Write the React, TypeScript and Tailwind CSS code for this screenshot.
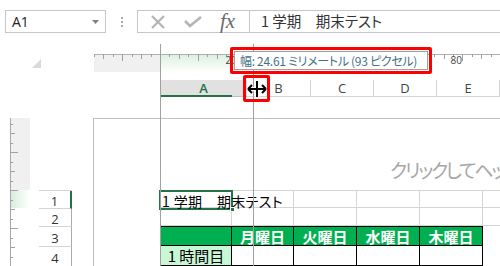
import React from 'react';

const GRID = 'border-[#d4d4d4]';
const PALT = "[font-feature-settings:'palt']";

function NameBox() {
  return (
    <div className="flex h-[23px] w-[101px] items-center justify-between border border-[#c6c6c6] pl-[6px] pr-[6px]">
      <span className="font-['Open_Sans',sans-serif] text-[14px] leading-none text-[#222]">A1</span>
      <svg width="7" height="4" viewBox="0 0 7 4">
        <path d="M0 0h7L3.5 4z" fill="#808080" />
      </svg>
    </div>
  );
}

function FormulaButtons() {
  return (
    <div className="flex h-[23px] w-[113px] items-center border border-[#c6c6c6] pl-[12px]">
      <svg width="16" height="16" viewBox="0 0 16 16" className="mr-[18px]">
        <path d="M2 2l12 12M14 2L2 14" stroke="#b4b4b4" strokeWidth="2.2" />
      </svg>
      <svg width="18" height="12" viewBox="0 0 18 12" className="mr-[18px]">
        <path d="M1 5l5 5L17 1" stroke="#b4b4b4" strokeWidth="2.6" fill="none" />
      </svg>
      <span className="font-['Liberation_Serif',serif] text-[21px] italic leading-none text-[#6a6a6a]">fx</span>
    </div>
  );
}

function FormulaBar() {
  return (
    <div className="flex h-[33px] pl-[5px] pt-[10px]">
      <NameBox />
      <div className="flex w-[31px] flex-col items-center justify-center gap-[2px]">
        <div className="h-[2px] w-[2px] bg-[#aaa]" />
        <div className="h-[2px] w-[2px] bg-[#aaa]" />
        <div className="h-[2px] w-[2px] bg-[#aaa]" />
      </div>
      <FormulaButtons />
      <div className="flex h-[23px] flex-1 items-center border-y border-[#c6c6c6] pl-[11px]">
        <span className={`whitespace-pre text-[14.5px] leading-none text-[#333] ${PALT}`}>1 学期　期末テスト</span>
      </div>
    </div>
  );
}

function HRuler() {
  const ticks = [];
  for (let i = -7; i <= 36; i++) {
    const x = Math.round(66 + i * 9.45) + 0.5;
    const len = i % 4 === 0 ? 7 : i % 2 === 0 ? 5 : 3;
    ticks.push(<line key={i} x1={x} x2={x} y1={0} y2={len} />);
  }
  return (
    <div className="relative ml-px flex h-[18px]">
      <div className="w-[66px] bg-[#f0f0f0]" />
      <div className="w-[93px] bg-gradient-to-b from-[#d9f0df] to-white" />
      <svg width="406" height="18" className="absolute left-0 top-0" shapeRendering="crispEdges">
        <line x1="0" x2="406" y1="0.5" y2="0.5" stroke="#b0b0b0" />
        <g stroke="#a0a0a0">{ticks}</g>
        <text x="143" y="10" textAnchor="end" fontSize="10" fill="#444" fontFamily="Open Sans, sans-serif">20</text>
        <text x="368" y="10" textAnchor="end" fontSize="10" fill="#444" fontFamily="Open Sans, sans-serif">80</text>
      </svg>
    </div>
  );
}

function ColumnHeaders() {
  const cols = [
    { l: 'B', w: 'w-[64px]' },
    { l: 'C', w: 'w-[63px]' },
    { l: 'D', w: 'w-[63px]' },
    { l: 'E', w: 'w-[63px]' },
  ];
  return (
    <div className="flex h-[17px] pl-[67px] font-['Open_Sans',sans-serif] text-[13px] leading-none">
      <div className="relative flex w-[93px] items-center justify-center border-b border-[#c0c0c0] bg-[#e1e1e1] font-semibold text-[#217346]">
        A
        <div className="absolute bottom-[-1px] left-0 h-[2px] w-[72px] bg-[#217346]" />
      </div>
      {cols.map((c) => (
        <div key={c.l} className={`${c.w} flex shrink-0 items-center justify-center border-b border-r border-[#d4d4d4] text-[#444]`}>
          {c.l}
        </div>
      ))}
    </div>
  );
}

function VRuler() {
  const ticks = [];
  for (let i = -8; i <= 8; i++) {
    const y = Math.round(72 + i * 9.5) + 0.5;
    const len = i % 4 === 0 ? 8 : i % 2 === 0 ? 5 : 3;
    ticks.push(<line key={i} x1={0} x2={len} y1={y} y2={y} />);
  }
  return (
    <div className="relative ml-[10px] flex h-[148px] w-[20px] flex-col">
      <div className="h-[72px] bg-[#f0f0f0]" />
      <div className="h-[18px] bg-gradient-to-r from-[#d4eedb] to-white" />
      <svg width="20" height="148" className="absolute left-0 top-0" shapeRendering="crispEdges">
        <line x1="0.5" x2="0.5" y1="0" y2="148" stroke="#a8a8a8" />
        <g stroke="#a0a0a0">{ticks}</g>
      </svg>
    </div>
  );
}

function RowHeaders() {
  const rows = [
    { n: '1', h: 'h-[18px]', sel: true },
    { n: '2', h: 'h-[18px]', sel: false },
    { n: '3', h: 'h-[20px]', sel: false },
    { n: '4', h: 'h-[20px]', sel: false },
  ];
  return (
    <div className="ml-[9px] w-[33px] pt-[72px] font-['Open_Sans',sans-serif] text-[13px] leading-none text-[#333]">
      <div className="border-t border-[#d4d4d4]">
        {rows.map((r) => (
          <div
            key={r.n}
            className={`${r.h} flex items-center justify-center border-b border-[#d4d4d4] pt-[3px] ${r.sel ? 'border-r-2 border-r-[#217346]' : 'border-r border-r-[#ababab]'}`}
          >
            {r.n}
          </div>
        ))}
      </div>
    </div>
  );
}

function LeftGutter() {
  return (
    <div className="w-[93px] shrink-0">
      <div className="h-[21px]" />
      <div className="h-[18px] pl-[32px] pt-[5px]">
        <svg width="9" height="9" viewBox="0 0 9 9">
          <path d="M9 0v9H0z" fill="#dadada" />
        </svg>
      </div>
      <div className="h-[46px]" />
      <div className="flex">
        <VRuler />
        <RowHeaders />
      </div>
    </div>
  );
}

const widths = ['w-[72px]', 'w-[62px]', 'w-[63px]', 'w-[63px]', 'w-[63px]', 'w-[40px]'];

function Rows() {
  const days = ['月曜日', '火曜日', '水曜日', '木曜日'];
  return (
    <div className="pl-[66px] text-[15px] leading-none">
      {/* row 1 */}
      <div className={`relative flex h-[18px] border-t ${GRID}`}>
        {widths.map((w, i) => (
          <div key={i} className={`${w} shrink-0 border-b border-r ${GRID}`} />
        ))}
        <div className="absolute left-[-1px] top-[-1px] flex h-[20px] w-[74px] items-center border-2 border-[#217346] pl-[1px] pt-[1px]">
          <span className={`whitespace-pre text-[14px] tracking-[0.4px] text-black ${PALT}`}>1 学期　期末テスト</span>
          <div className="absolute bottom-[-4px] right-[-4px] h-[5px] w-[5px] border border-white bg-[#217346]" />
        </div>
      </div>
      {/* row 2 */}
      <div className="flex h-[18px]">
        {widths.map((w, i) => (
          <div key={i} className={`${w} shrink-0 border-b border-r ${GRID}`} />
        ))}
      </div>
      {/* row 3 */}
      <div className="flex h-[20px]">
        <div className="w-[72px] shrink-0 border-x border-y border-black bg-[#00b050]" />
        {days.map((d, i) => (
          <div
            key={d}
            className={`${widths[i + 1]} flex shrink-0 items-center justify-center border-y border-r border-black bg-[#00b050] font-bold text-white`}
          >
            {d}
          </div>
        ))}
      </div>
      {/* row 4 */}
      <div className="flex h-[20px]">
        <div className="flex w-[72px] shrink-0 items-center justify-center whitespace-pre border-x border-b border-black bg-[#c8f7d6] text-black">
          1 時間目
        </div>
        {days.map((d, i) => (
          <div key={d} className={`${widths[i + 1]} shrink-0 border-b border-r border-black`} />
        ))}
      </div>
    </div>
  );
}

function Sheet() {
  return (
    <div className="min-w-0 flex-1">
      <div className="h-[21px]" />
      <HRuler />
      <div className="h-[8px]" />
      <ColumnHeaders />
      <div className="h-[21px]" />
      <div className="h-[148px] border-l border-t border-[#bfbfbf]">
        <div className={`h-[71px] whitespace-nowrap pl-[296px] pt-[41px] text-[19px] leading-none tracking-[-2.2px] text-[#a6a6a6] ${PALT}`}>
          クリックしてヘッダーを追加
        </div>
        <Rows />
      </div>
    </div>
  );
}

export default function App() {
  return (
    <div className="relative h-[266px] w-[500px] overflow-hidden bg-white font-['Noto_Sans_CJK_JP',sans-serif] text-[#333]">
      <FormulaBar />
      <div className="flex">
        <LeftGutter />
        <Sheet />
      </div>

      {/* resize guide lines */}
      <div className="absolute bottom-0 left-[160px] top-[44px] w-px bg-[#a0a0a0]" />
      <div className="absolute bottom-0 left-[253px] top-[44px] w-px bg-[#a0a0a0]" />

      {/* width tooltip */}
      <div className="absolute left-[230px] top-[47px] h-[27px] w-[202px] rounded-[2px] border-[3px] border-[#ff0000] p-[1px]">
        <div className={`flex h-full items-center whitespace-nowrap border border-[#a0a0a0] bg-white pl-[5px] text-[12px] leading-none tracking-[-0.3px] text-[#3f7282] ${PALT}`}>
          幅: 24.61 ミリメートル (93 ピクセル)
        </div>
      </div>

      {/* resize cursor */}
      <div className="absolute left-[243px] top-[75px] flex h-[27px] w-[27px] items-center justify-center rounded-[2px] border-[3px] border-[#ff0000]">
        <svg width="20" height="18" viewBox="0 0 20 18">
          <path d="M1 9h18M1 9l4-4M1 9l4 4M19 9l-4-4M19 9l-4 4M10 1v16" stroke="#fff" strokeWidth="4" fill="none" />
          <path d="M1 9h18M1 9l4-4M1 9l4 4M19 9l-4-4M19 9l-4 4M10 1v16" stroke="#000" strokeWidth="2" fill="none" />
        </svg>
      </div>
    </div>
  );
}
